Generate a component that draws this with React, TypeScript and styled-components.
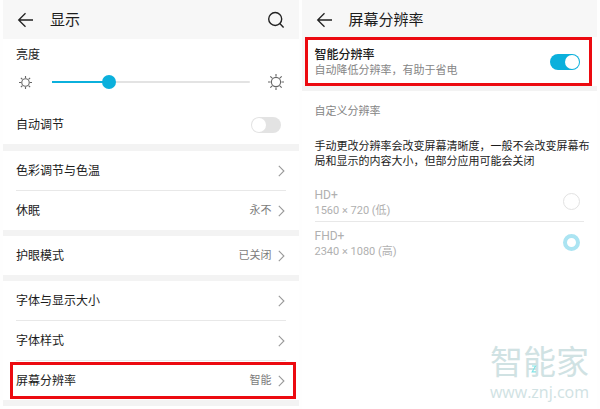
import React, { useState } from 'react';
import styled, { createGlobalStyle, css } from 'styled-components';

const ACCENT = '#0bb0dc';
const RED = '#ec0a10';

const GlobalStyle = createGlobalStyle`
  *, *::before, *::after { box-sizing: border-box; }
  body {
    margin: 0;
    background: #fefefe;
    color: #1c1c1c;
    font-family: Roboto, "Noto Sans CJK SC", sans-serif;
    font-size: 12px;
    line-height: 16px;
  }
  h1, h2, p { margin: 0; font-weight: 400; }
  button, input { font: inherit; color: inherit; margin: 0; }
`;

const Screens = styled.main`
  display: grid;
  grid-template-columns: 1fr 1fr;
  gap: 3px;
  min-height: 100vh;
  padding: 0 3px;
`;

const Panel = styled.section`
  display: flex;
  flex-direction: column;
  min-width: 0;
  background: #fff;
`;

const Header = styled.header<{ $short?: boolean }>`
  display: flex;
  align-items: center;
  gap: 15px;
  height: ${(p) => (p.$short ? 37 : 39)}px;
  padding: ${(p) => (p.$short ? '2px 14px 0' : '0 14px')};
  background: #f7f7f7;
`;

const Title = styled.h1`
  flex: 1;
  font-size: 15px;
  line-height: 20px;
`;

const IconButton = styled.button`
  display: flex;
  padding: 0;
  border: 0;
  background: none;
`;

const Band = styled.div<{ $height?: number }>`
  height: ${(p) => p.$height ?? 6}px;
  background: #f3f3f3;
`;

const highlight = css`
  border: 3px solid ${RED};
  background: #fff;
`;

const Brightness = styled.div`
  padding: 8px 15px 0 13px;
`;

const SliderRow = styled.div`
  display: flex;
  align-items: center;
  justify-content: space-between;
  height: 38px;
  padding-left: 3px;
`;

const Slider = styled.input`
  flex: 1;
  height: 14px;
  margin: 0 18px 0 20px;
  appearance: none;
  background-color: transparent;
  background-repeat: no-repeat;
  background-position: center;
  background-size: 100% 2px;
  &::-webkit-slider-thumb {
    appearance: none;
    width: 14px;
    height: 14px;
    border-radius: 50%;
    background: ${ACCENT};
  }
`;

const SwitchRow = styled.label`
  display: flex;
  align-items: center;
  justify-content: space-between;
  height: 43px;
  padding: 4px 18px 0 13px;
`;

const Switch = styled.input`
  flex: none;
  display: flex;
  align-items: center;
  width: 30px;
  height: 16px;
  padding: 1px;
  border-radius: 8px;
  appearance: none;
  background: #e3e3e3;
  &::before {
    content: '';
    width: 14px;
    height: 14px;
    border-radius: 50%;
    background: #fff;
  }
  &:checked {
    justify-content: flex-end;
    background: ${ACCENT};
  }
`;

const Item = styled.button<{ $highlight?: boolean }>`
  display: flex;
  align-items: center;
  gap: 6px;
  height: 39px;
  padding: 0 14px 0 13px;
  border: 0;
  background: none;
  text-align: left;
  ${(p) =>
    p.$highlight &&
    css`
      ${highlight}
      height: 37px;
      margin: 1px 3px 1px 7px;
      padding: 0 8px 0 3px;
    `}
`;

const ItemLabel = styled.span`
  flex: 1;
`;

const ItemValue = styled.span`
  color: #7c7c7c;
  font-size: 11px;
`;

const Divider = styled.hr`
  width: auto;
  height: 1px;
  margin: 0 13px;
  border: 0;
  background: #e8e8e8;
`;

const SmartRow = styled.label`
  ${highlight}
  display: flex;
  align-items: center;
  justify-content: space-between;
  height: 49px;
  margin: 0 5px 0 3px;
  padding: 0 9px 0 7px;
`;

const SmartArea = styled.div`
  background: linear-gradient(to right, #f7f7f7 3px, #fff 3px);
`;

const SmartText = styled.span`
  display: flex;
  flex-direction: column;
  padding-top: 3px;
`;

const SmartTitle = styled.span`
  font-weight: 500;
`;

const Hint = styled.span`
  color: #858585;
  font-size: 11px;
`;

const SectionTitle = styled.h2`
  padding: 13px 13px 0;
  color: #858585;
  font-size: 11px;
  line-height: 16px;
`;

const Note = styled.p`
  padding: 19px 6px 0 13px;
  font-size: 11px;
  line-height: 15px;
`;

const Options = styled.div`
  padding-top: 12px;
`;

const Option = styled.label`
  display: flex;
  align-items: center;
  justify-content: space-between;
  height: 40px;
  padding: 0 17px 0 13px;
  color: #b0b0b0;
`;

const OptionText = styled.span`
  display: flex;
  flex-direction: column;
  padding-top: 3px;
`;

const OptionSize = styled.span`
  font-size: 11px;
`;

const Radio = styled.input`
  flex: none;
  width: 17px;
  height: 17px;
  border: 1px solid #e2e2e2;
  border-radius: 50%;
  appearance: none;
  background: #fff;
  &:checked {
    border: 4px solid #abe4f2;
  }
`;

const Watermark = styled.footer`
  display: flex;
  flex-direction: column;
  align-items: flex-end;
  margin-top: auto;
  padding: 0 8px 6px 0;
  color: #d0e2e3;
  font-family: "Open Sans", "Noto Sans CJK SC", sans-serif;
`;

const Brand = styled.span`
  position: relative;
  font-size: 33px;
  line-height: 38px;
`;

const BrandMark = styled.svg`
  position: absolute;
  left: 41px;
  bottom: 8px;
`;

const Site = styled.span`
  font-size: 16px;
  line-height: 22px;
`;

function BackIcon() {
  return (
    <svg width="18" height="18" viewBox="0 0 18 18" fill="none" stroke="#222" strokeWidth="1.3">
      <path d="M8.5 2.2 1.7 9l6.8 6.8M1.7 9H16" />
    </svg>
  );
}

function SearchIcon() {
  return (
    <svg width="18" height="18" viewBox="0 0 18 18" fill="none" stroke="#222" strokeWidth="1.4">
      <circle cx="8.2" cy="8" r="6.5" />
      <path d="m12.8 12.6 3.8 3.9" />
    </svg>
  );
}

function SunIcon({ size }: { size: number }) {
  return (
    <svg width={size} height={size} viewBox="0 0 16 16" fill="none" stroke="#666" strokeWidth={18 / size}>
      <circle cx="8" cy="8" r="4.6" />
      <path d="M8 0v2.6M8 13.4V16M0 8h2.6M13.4 8H16M2.3 2.3l1.9 1.9M11.8 11.8l1.9 1.9M2.3 13.7l1.9-1.9M11.8 4.2l1.9-1.9" />
    </svg>
  );
}

function Chevron() {
  return (
    <svg width="7" height="12" viewBox="0 0 7 12" fill="none" stroke="#999" strokeWidth="1.1">
      <path d="M.8.9 5.9 6 .8 11.1" />
    </svg>
  );
}

type RowProps = { label: string; value?: string; highlighted?: boolean };

function Row({ label, value, highlighted }: RowProps) {
  return (
    <Item type="button" $highlight={highlighted}>
      <ItemLabel>{label}</ItemLabel>
      {value && <ItemValue>{value}</ItemValue>}
      <Chevron />
    </Item>
  );
}

function DisplayScreen() {
  const [level, setLevel] = useState(27);
  const [auto, setAuto] = useState(false);
  return (
    <Panel>
      <Header>
        <IconButton type="button" aria-label="返回"><BackIcon /></IconButton>
        <Title>显示</Title>
        <IconButton type="button" aria-label="搜索"><SearchIcon /></IconButton>
      </Header>
      <Brightness>
        <label htmlFor="brightness">亮度</label>
        <SliderRow>
          <SunIcon size={13} />
          <Slider
            id="brightness"
            type="range"
            value={level}
            onChange={(e) => setLevel(Number(e.target.value))}
            style={{ backgroundImage: `linear-gradient(to right, ${ACCENT} ${level}%, #e3e3e3 ${level}%)` }}
          />
          <SunIcon size={16} />
        </SliderRow>
      </Brightness>
      <SwitchRow>
        自动调节
        <Switch type="checkbox" role="switch" checked={auto} onChange={() => setAuto(!auto)} />
      </SwitchRow>
      <Band $height={7} />
      <Row label="色彩调节与色温" />
      <Divider />
      <Row label="休眠" value="永不" />
      <Band />
      <Row label="护眼模式" value="已关闭" />
      <Band />
      <Row label="字体与显示大小" />
      <Divider />
      <Row label="字体样式" />
      <Divider />
      <Row label="屏幕分辨率" value="智能" highlighted />
      <Band />
    </Panel>
  );
}

const RESOLUTIONS = [
  { id: 'hd', name: 'HD+', size: '1560 × 720 (低)' },
  { id: 'fhd', name: 'FHD+', size: '2340 × 1080 (高)' },
];

function ResolutionScreen() {
  const [smart, setSmart] = useState(true);
  const [chosen, setChosen] = useState('fhd');
  return (
    <Panel>
      <Header $short>
        <IconButton type="button" aria-label="返回"><BackIcon /></IconButton>
        <Title>屏幕分辨率</Title>
      </Header>
      <SmartArea>
        <SmartRow>
          <SmartText>
            <SmartTitle>智能分辨率</SmartTitle>
            <Hint>自动降低分辨率，有助于省电</Hint>
          </SmartText>
          <Switch type="checkbox" role="switch" checked={smart} onChange={() => setSmart(!smart)} />
        </SmartRow>
      </SmartArea>
      <Band $height={5} />
      <SectionTitle>自定义分辨率</SectionTitle>
      <Note>手动更改分辨率会改变屏幕清晰度，一般不会改变屏幕布局和显示的内容大小，但部分应用可能会关闭</Note>
      <Options>
        {RESOLUTIONS.map((r, i) => (
          <React.Fragment key={r.id}>
            {i > 0 && <Divider />}
            <Option>
              <OptionText>
                {r.name}
                <OptionSize>{r.size}</OptionSize>
              </OptionText>
              <Radio
                type="radio"
                name="resolution"
                checked={chosen === r.id}
                onChange={() => setChosen(r.id)}
                disabled={smart}
              />
            </Option>
          </React.Fragment>
        ))}
      </Options>
      <Watermark>
        <Brand>
          智能家
          <BrandMark width="6" height="8" viewBox="0 0 6 8" fill="none" stroke="#7fe3e6" strokeWidth="1.2">
            <path d="M1 1h3.6L1.2 6.8H5" />
          </BrandMark>
        </Brand>
        <Site>www.znj.com</Site>
      </Watermark>
    </Panel>
  );
}

export default function App() {
  return (
    <>
      <GlobalStyle />
      <Screens>
        <DisplayScreen />
        <ResolutionScreen />
      </Screens>
    </>
  );
}
